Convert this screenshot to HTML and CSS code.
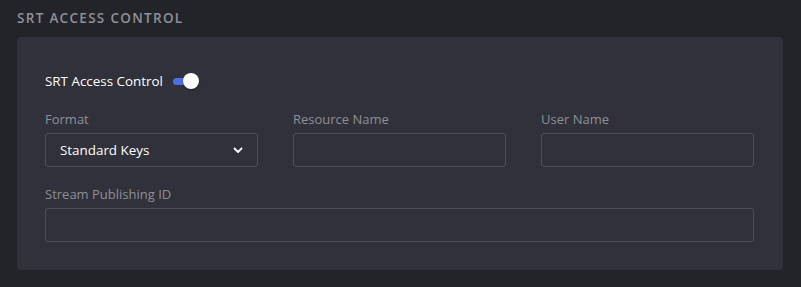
FILE: index.html
```html
<!DOCTYPE html>
<html lang="en">
<head>
  <meta charset="UTF-8" />
  <title>SRT Access Control</title>
  <link rel="stylesheet" href="styles.css">
</head>
<body>
  <h2 class="section-title">SRT Access Control</h2>

  <div class="card">
    <div class="toggle-row">
      <span>SRT Access Control</span>
      <span class="switch"><span class="knob"></span></span>
    </div>

    <div class="fields">
      <div class="field">
        <label>Format</label>
        <div class="select">
          <span>Standard Keys</span>
          <svg width="10" height="7" viewBox="0 0 10 7"><path d="M1.5 1.5 L5 5 L8.5 1.5" fill="none" stroke="#fff" stroke-width="1.8" stroke-linecap="round" stroke-linejoin="round"/></svg>
        </div>
      </div>
      <div class="field">
        <label>Resource Name</label>
        <div class="input"></div>
      </div>
      <div class="field">
        <label>User Name</label>
        <div class="input"></div>
      </div>
      <div class="field wide">
        <label>Stream Publishing ID</label>
        <div class="input"></div>
      </div>
    </div>
  </div>
</body>
</html>
```

FILE: styles.css
```css
* { margin: 0; padding: 0; box-sizing: border-box; }

body {
  background: #232429;
  font-family: "Open Sans", Lato, sans-serif;
  padding: 10px 17px 17px;
  color: #fff;
}

.section-title {
  font-size: 13.5px;
  font-weight: 600;
  text-transform: uppercase;
  letter-spacing: 1.3px;
  color: #8f9097;
  line-height: 16px;
  margin-bottom: 11px;
}

.card {
  background: #30313a;
  border-radius: 4px;
  padding: 28px 28px 28px;
  width: 766px;
}

.toggle-row {
  display: flex;
  align-items: center;
  gap: 10px;
  height: 32px;
  font-size: 13.4px;
  margin-bottom: 14px;
}

.switch {
  position: relative;
  width: 25px;
  height: 7px;
  border-radius: 4px;
  background: #4a70e4;
}

.switch .knob {
  position: absolute;
  right: -1px;
  top: -5px;
  width: 16px;
  height: 16px;
  border-radius: 50%;
  background: #fff;
  box-shadow: 0 1px 2px rgba(0,0,0,0.4);
}

.fields {
  display: grid;
  grid-template-columns: repeat(3, 213px);
  column-gap: 35px;
  row-gap: 19px;
}

.field.wide { grid-column: 1 / -1; }

.field label {
  display: block;
  font-size: 13px;
  font-weight: 500;
  line-height: 16px;
  color: #8e8f96;
  margin-bottom: 6px;
}

.input, .select {
  height: 34px;
  border: 1px solid #4d4e57;
  border-radius: 3px;
  background: #30313a;
}

.select {
  display: flex;
  align-items: center;
  justify-content: space-between;
  padding: 0 14px 0 14px;
  font-size: 13.4px;
  color: #fff;
}
```
